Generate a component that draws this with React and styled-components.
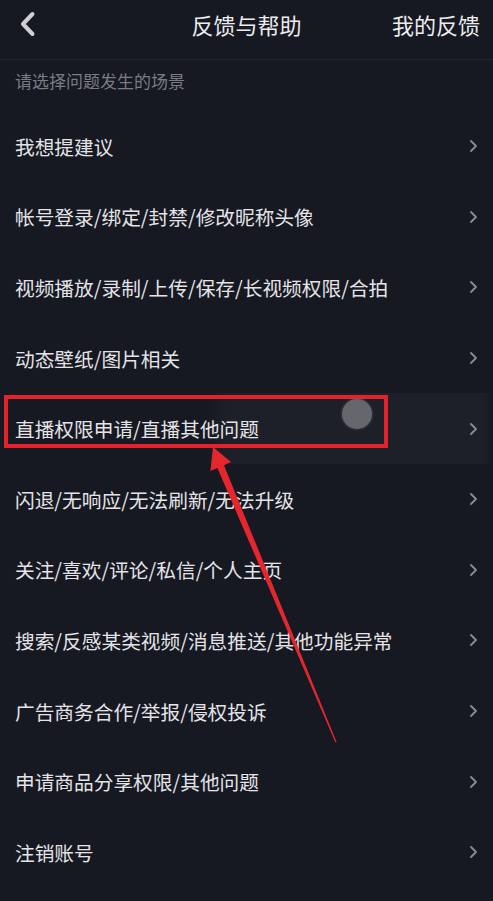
import React from 'react';
import styled, { createGlobalStyle } from 'styled-components';

const GlobalStyle = createGlobalStyle`
  html, body {
    margin: 0;
    padding: 0;
    background: #161822;
  }
  * {
    box-sizing: border-box;
  }
`;

const items = [
  '我想提建议',
  '帐号登录/绑定/封禁/修改昵称头像',
  '视频播放/录制/上传/保存/长视频权限/合拍',
  '动态壁纸/图片相关',
  '直播权限申请/直播其他问题',
  '闪退/无响应/无法刷新/无法升级',
  '关注/喜欢/评论/私信/个人主页',
  '搜索/反感某类视频/消息推送/其他功能异常',
  '广告商务合作/举报/侵权投诉',
  '申请商品分享权限/其他问题',
  '注销账号',
];

function App() {
  return (
    <Page>
      <GlobalStyle />
      <Header>
        <BackButton>
          <svg width="17" height="26" viewBox="0 0 17 26">
            <path
              d="M13.5 3 L4 13 L13.5 23"
              fill="none"
              stroke="#cfd0d5"
              strokeWidth="4"
              strokeLinecap="round"
              strokeLinejoin="round"
            />
          </svg>
        </BackButton>
        <Title>反馈与帮助</Title>
        <HeaderAction>我的反馈</HeaderAction>
      </Header>
      <SectionLabel>请选择问题发生的场景</SectionLabel>
      <List>
        {items.map((text, i) => (
          <Row key={text} pressed={i === 4}>
            <RowText>{text}</RowText>
            <svg width="9" height="14" viewBox="0 0 9 14">
              <path
                d="M2 2 L7 7 L2 12"
                fill="none"
                stroke="#8b8c93"
                strokeWidth="1.8"
                strokeLinecap="round"
                strokeLinejoin="round"
              />
            </svg>
            {i === 4 && (
              <>
                <RedBox />
                <TouchDot />
              </>
            )}
          </Row>
        ))}
      </List>
      <Arrow width="493" height="901" viewBox="0 0 493 901">
        <polygon
          points="213,447 231,462 224,465.3 336.6,742 335.4,742.4 217.4,468 210.4,471"
          fill="#e6262d"
        />
      </Arrow>
    </Page>
  );
}

export default App;

const Page = styled.div`
  position: relative;
  width: 493px;
  min-height: 901px;
  background: #161822;
  font-family: 'Noto Sans CJK SC', 'Noto Sans', sans-serif;
  overflow: hidden;
`;

const Header = styled.div`
  position: relative;
  display: flex;
  align-items: center;
  justify-content: space-between;
  height: 60px;
  padding: 0 13px 11px 19px;
  border-bottom: 1px solid #22242d;
`;

const BackButton = styled.div`
  display: flex;
  align-items: center;
  width: 60px;
`;

const Title = styled.div`
  position: absolute;
  left: 0;
  right: 0;
  top: 7px;
  text-align: center;
  font-size: 22px;
  line-height: 34px;
  color: #ececee;
  pointer-events: none;
`;

const HeaderAction = styled.div`
  font-size: 22px;
  line-height: 34px;
  color: #ececee;
`;

const SectionLabel = styled.div`
  height: 51px;
  padding: 8px 15px 0;
  font-size: 17px;
  line-height: 26px;
  color: #7a7c85;
`;

const List = styled.div`
  display: flex;
  flex-direction: column;
`;

const Row = styled.div`
  position: relative;
  display: flex;
  align-items: center;
  justify-content: space-between;
  height: 70.6px;
  padding: 0 15px;
  background: ${props =>
    props.pressed
      ? 'linear-gradient(to right, rgba(255,255,255,0) 42%, rgba(255,255,255,0.03) 46%, rgba(255,255,255,0.03) 98%, rgba(255,255,255,0) 100%)'
      : 'transparent'};
`;

const RowText = styled.div`
  font-size: 19.7px;
  color: #e4e4e7;
  white-space: nowrap;
`;

const RedBox = styled.div`
  position: absolute;
  left: 4px;
  top: 2px;
  width: 384px;
  height: 53px;
  border: 4px solid #e5222b;
`;

const TouchDot = styled.div`
  position: absolute;
  left: 342px;
  top: 6px;
  width: 30px;
  height: 30px;
  border-radius: 50%;
  background: #66676d;
  box-shadow: 0 0 3px rgba(120, 120, 126, 0.6);
`;

const Arrow = styled.svg`
  position: absolute;
  left: 0;
  top: 0;
  pointer-events: none;
`;
